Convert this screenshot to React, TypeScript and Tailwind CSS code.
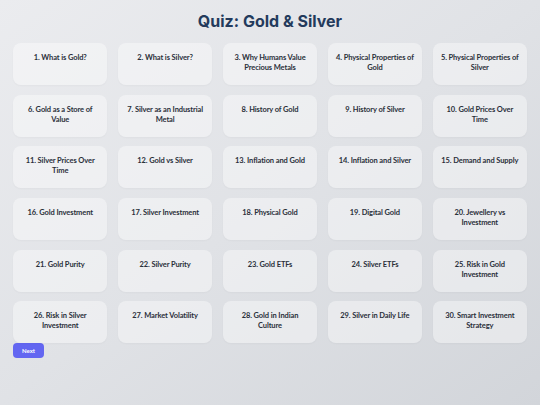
import React from "react";

const topics = [
  "1. What is Gold?",
  "2. What is Silver?",
  "3. Why Humans Value Precious Metals",
  "4. Physical Properties of Gold",
  "5. Physical Properties of Silver",
  "6. Gold as a Store of Value",
  "7. Silver as an Industrial Metal",
  "8. History of Gold",
  "9. History of Silver",
  "10. Gold Prices Over Time",
  "11. Silver Prices Over Time",
  "12. Gold vs Silver",
  "13. Inflation and Gold",
  "14. Inflation and Silver",
  "15. Demand and Supply",
  "16. Gold Investment",
  "17. Silver Investment",
  "18. Physical Gold",
  "19. Digital Gold",
  "20. Jewellery vs Investment",
  "21. Gold Purity",
  "22. Silver Purity",
  "23. Gold ETFs",
  "24. Silver ETFs",
  "25. Risk in Gold Investment",
  "26. Risk in Silver Investment",
  "27. Market Volatility",
  "28. Gold in Indian Culture",
  "29. Silver in Daily Life",
  "30. Smart Investment Strategy",
];

export default function App() {
  return (
    <div className="w-[540px] h-[405px] overflow-hidden bg-gradient-to-br from-[#ebecef] via-[#e0e2e6] to-[#d2d5da] px-[13px] pt-[9px]">
      <h1 className="text-center text-[16px] leading-[24px] font-bold text-[#233a5c] font-['Inter',sans-serif]">
        Quiz: Gold &amp; Silver
      </h1>
      <div className="grid grid-cols-5 gap-x-[10.5px] gap-y-[9.7px] mt-[10px]">
        {topics.map((t) => (
          <div
            key={t}
            className="h-[42px] rounded-[8px] bg-white/40 shadow-[0_1px_2px_rgba(0,0,0,0.03)] px-[6px] pt-[10px] text-center text-[7.5px] leading-[10px] font-bold tracking-[-0.1px] text-[#2a2f3a] font-['Lato',sans-serif]"
          >
            {t}
          </div>
        ))}
      </div>
      <button className="w-[31px] h-[15px] rounded-[4px] bg-[#6366f1] text-white text-[6px] font-bold flex items-center justify-center font-['Lato',sans-serif]">
        Next
      </button>
    </div>
  );
}
